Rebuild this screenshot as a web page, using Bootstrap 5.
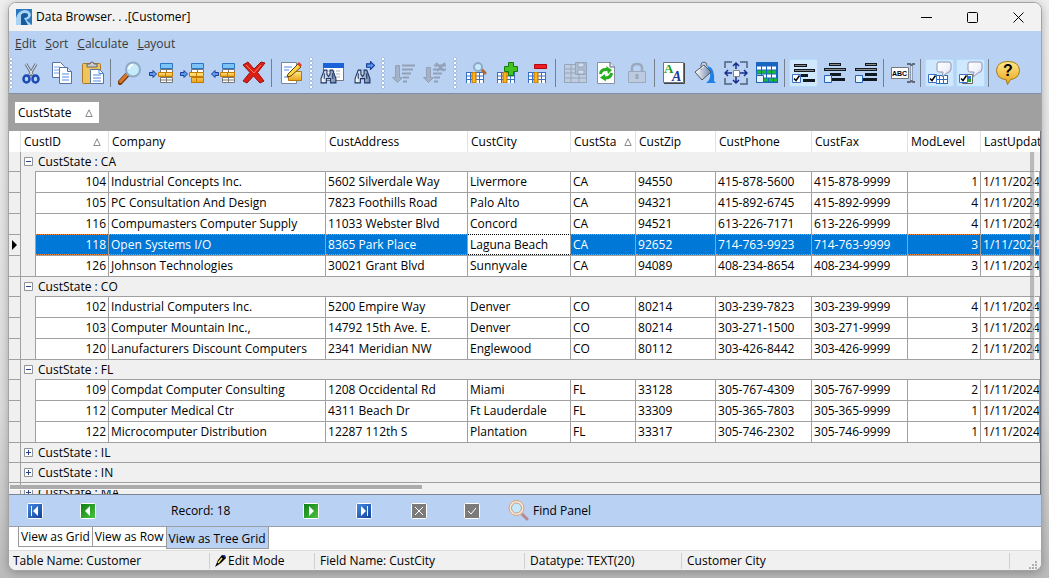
<!DOCTYPE html>
<html lang="en">
<head>
<meta charset="utf-8">
<meta name="viewport" content="width=device-width, initial-scale=1">
<title>Data Browser</title>
<link href="https://cdn.jsdelivr.net/npm/bootstrap@5.3.0/dist/css/bootstrap.min.css" rel="stylesheet">
<style>
body{font:12px/16px "Open Sans","Noto Sans",sans-serif;color:#000;background:linear-gradient(#eee,#ddd 70%,#bbb);height:100vh;padding:2px 7px 7px 8px;overflow:hidden}
button{font:inherit;color:inherit;background:none;border:0;padding:0}
svg{display:block}
.app-window{border:1px solid #a3a3a3;border-radius:8px;overflow:hidden;background:#fff;box-shadow:0 2px 10px #0004}
.title-strip{height:28px;background:#f2f2f2;padding-left:7px}
.win-btn{width:46px;height:28px}
.blue{background:#b9d1f3}
.menu-strip{height:24px;padding:1px 6px 0;gap:9px}
.menu-strip a{color:#3a3a3a;text-decoration:none}
.tool-strip{height:39px;gap:2px;border-bottom:1px solid #7d8fa9;padding-bottom:2px}
.tool{width:29px;height:28px;flex:none;display:flex;align-items:center;justify-content:center;border-radius:2px}
.tool.on{background:#cfe8fd;border:1px solid #b0dcff}
.tool:disabled{opacity:.4;filter:grayscale(1)}
.sep{width:4px;height:28px;flex:none;background:linear-gradient(#75808f,#75808f) 1px 0/1px 100% no-repeat}
.grip{width:8px;height:32px;flex:none;background:radial-gradient(circle at 2px 2px,#fff 1px,#93a7c4 1px,transparent 2px) 2px 0/4px 4px repeat-y}
.grip.lead-grip{width:5px;background-position:0 0}
.group-panel{height:37px;background:#a0a0a0;padding-left:6px}
.chip{width:84px;height:21px;background:#fff;padding:0 6px 0 3px}
.grid-pane{background:#f0f0f0;min-height:0;border-right:1px solid #70757d}
.data-grid{table-layout:fixed;border-collapse:separate;border-spacing:0;width:100%}
.data-grid th,.data-grid td{white-space:nowrap;overflow:hidden;height:21px;padding:0 2px;line-height:18px}
.data-grid th{background:#fff;font-weight:400;border-right:1px solid #e2e2e2;padding:0 3px}
.data-grid th:last-child{border-right:0;padding-right:0}
.data-grid td{border-top:1px solid #a0a0a0;border-right:1px solid #a0a0a0;background:#fff}
.data-grid td.ind{background:#f0f0f0;padding:0}
.data-grid td.pad{background:#f0f0f0;border-top:0}
.data-grid td.num{text-align:right}
.data-grid .grp td{background:#f0f0f0;height:20px}
.data-grid .grp td+td{border-right:0;padding-left:3px}
.data-grid .grp svg{margin-right:5px}
.data-grid .first td{border-top:0;height:19px}
.data-grid .sel td:nth-child(n+3){background:#0078d7;color:#fff;border-top:1px dotted #f58b3c;border-bottom:1px dotted #f58b3c}
.data-grid .sel td.focus{background:#fff;color:#000;border-top-color:#000;border-bottom-color:#000}
.vbar{position:absolute;right:5px;top:21px;width:5px;height:208px;background:#8888;border-right:1px solid #fffa}
.hbar{position:absolute;left:1px;right:0;bottom:0;height:12px;border-top:1px solid #a0a0a0}
.hbar span{display:block;width:40%;height:5px;margin-top:2px;background:#acacac;border-bottom:1px solid #fff}
.nav-strip{height:33px;border-top:1px solid #7d8794;border-bottom:1px solid #9a9ea5;display:grid;grid-template-columns:53px 91px 132px 53px 55px 53px 44px auto;align-items:center;justify-content:start;padding-left:18px}
.tab-strip{height:23px;padding-left:9px}
.view-tab{height:20px;border:1px solid #9a9a9a;border-top:0;padding:0 2px;margin-right:-1px;white-space:nowrap;line-height:18px}
.view-tab.on{height:22px;background:#b9d1f3;padding-top:2px;position:relative}
.status-strip{height:20px;background:#f0f0f0;border-top:1px solid #dcdcdc;display:grid;grid-template-columns:200px 105px 210px 157px 1fr 32px;align-items:center}
.status-strip>*+*{border-left:1px solid #d0d0d0;padding-left:5px;height:16px}
.status-strip>:first-child{padding-left:4px}
</style>
</head>
<body>
<svg width="0" height="0" class="position-absolute" aria-hidden="true">
<defs>
<linearGradient id="gold" x2="0" y2="1"><stop stop-color="#ffe88a"/><stop offset="1" stop-color="#eaa31a"/></linearGradient>
<linearGradient id="steel" x2="1"><stop stop-color="#fff"/><stop offset="1" stop-color="#6f86ad"/></linearGradient>
<linearGradient id="cloud" x2="1" y2="1"><stop stop-color="#fff"/><stop offset=".6" stop-color="#f1f2fa"/><stop offset="1" stop-color="#b4b9d2"/></linearGradient>
<linearGradient id="grn" x2="1" y2="1"><stop stop-color="#0d7d14"/><stop offset="1" stop-color="#4cc642"/></linearGradient>
<linearGradient id="blu" x2="1" y2="1"><stop stop-color="#4a8be0"/><stop offset="1" stop-color="#0b3f9c"/></linearGradient>
<symbol id="glass" viewBox="0 0 24 24"><path d="M9 14 2 21.500" stroke="#7b3f12" stroke-width="5" stroke-linecap="round"/><path d="M8.500 14 2.500 20.500" stroke="#d9782c" stroke-width="3" stroke-linecap="round"/><circle cx="15" cy="8.500" r="7" fill="#c5ebfb" stroke="#8fabc6" stroke-width="2"/><path d="M11 8a4 4 0 0 1 4-4" stroke="#fff" stroke-width="2" fill="none"/></symbol>
<symbol id="minigrid" viewBox="0 0 18 11"><path fill="#fff" d="M0 0h18v11H0z"/><path d="M0 .5h18M0 4h18M0 7.500h18M.5 0v11M4.500 0v11M13.500 0v11M17.500 0v11" stroke="#3a6fc4"/><path d="M6 0h4v11H6z" fill="#ffb31a" stroke="#b26b00"/></symbol>
<symbol id="bino" viewBox="0 0 16 14"><path d="M4 1h2.500v4L8 7l1.500-2V1H12l3 8v4h-5V9H6v4H1V9z" fill="url(#steel)" stroke="#1d3562"/><path d="M4 4v5M12 4v5" stroke="#1d3562"/></symbol>
<symbol id="arr" viewBox="0 0 8 8"><path d="M.5 2.500H4V.5L7.500 4 4 7.500v-2H.5z" fill="#5d9bf0" stroke="#1a3f98"/></symbol>
<symbol id="rows" viewBox="0 0 13 20"><path d="M.5.5h12v5H.5z" fill="#7cc4f8" stroke="#2c74c4"/><path d="M.5 6.500h12v3H.5zM.5 14.500h12v5H.5z" fill="#fff" stroke="#777"/><path d="M6.500 6v4M6.500 14v6M1 17h11" stroke="#777"/></symbol>
<symbol id="plus" viewBox="0 0 9 9"><path fill="#fff" stroke="#8e9299" d="M.5.5h8v8h-8z"/><path d="M2 4.500h5M4.500 2v5" stroke="#27408b"/></symbol>
<symbol id="minus" viewBox="0 0 9 9"><path fill="#fff" stroke="#8e9299" d="M.5.5h8v8h-8z"/><path d="M2 4.500h5" stroke="#27408b"/></symbol>
<symbol id="up" viewBox="0 0 8 8"><path d="M4 .8 7.200 7.500H.8z" fill="none" stroke="#8a8a8a"/></symbol>
<symbol id="tick" viewBox="0 0 9 9"><path fill="#fff" stroke="#3a6fc4" d="M.5.5h8v8h-8z"/><path d="M2 4.500 4 6.500 7.500 1.500" fill="none" stroke="#000" stroke-width="1.500"/></symbol>
<symbol id="bubble" viewBox="0 0 16 17"><path d="M3 1 H13 Q15 1 15 3 V8 Q15 11 11 12 L6 16 L7 11 H3 Q1 11 1 9 V3 Q1 1 3 1 Z" fill="url(#cloud)" stroke="#8e94b4"/></symbol>
</defs></svg>

<div class="app-window d-flex flex-column h-100">
<header class="title-strip d-flex align-items-center flex-shrink-0">
<svg width="16" height="16" viewBox="0 0 16 16"><path fill="#2b77bd" d="M0 0h16v16H0z"/><path d="M0 9Q2 2 8 1q6 0 7 5-1 4-5 5l6 5H9L7 9 6 16H0z" fill="#a9d4f4"/><path d="M5 16V7q0-3 4-3 3 0 3 2 0 3-4 3l4 7" fill="#185a9e"/></svg>
<span class="ms-1 me-auto">Data Browser. . .[Customer]</span>
<button class="win-btn" aria-label="Minimize"><svg class="mx-auto" width="11" height="11"><path d="M0 5.500h11" stroke="#000"/></svg></button>
<button class="win-btn" aria-label="Maximize"><svg class="mx-auto" width="11" height="11"><rect x=".5" y=".5" width="10" height="10" rx="1" fill="none" stroke="#000"/></svg></button>
<button class="win-btn" aria-label="Close"><svg class="mx-auto" width="11" height="11"><path d="m.5.5 10 10m0-10-10 10" stroke="#000"/></svg></button>
</header>
<nav class="menu-strip blue d-flex align-items-center flex-shrink-0"><a href="#"><u>E</u>dit</a><a href="#"><u>S</u>ort</a><a href="#"><u>C</u>alculate</a><a href="#"><u>L</u>ayout</a></nav>
<div class="tool-strip blue d-flex align-items-center flex-shrink-0" role="toolbar" aria-label="Tools">
<i class="grip lead-grip"></i>
<button class="tool" aria-label="Cut"><svg width="24" height="24" fill="none"><path d="M7 3l7 12M17 3l-7 12" stroke="#6d7683" stroke-width="3"/><path d="M7 3l6.500 11M17 3l-6.500 11" stroke="#e9eef4"/><ellipse cx="7.500" cy="18" rx="3" ry="3.500" stroke="#1c4bb5" stroke-width="2.500"/><ellipse cx="16.500" cy="18" rx="3" ry="3.500" stroke="#1c4bb5" stroke-width="2.500"/></svg></button>
<button class="tool" aria-label="Copy"><svg width="24" height="24" fill="#fff" stroke="#5573a5"><path d="M2.500 1.500h8l4 4v11h-12z"/><path d="M4 6h6M4 9h6M4 12h6" stroke="#6fa2ec"/><path d="M9.500 6.500h8l4 4v12h-12z"/><path d="M17.500 6.500v4h4" fill="#cfe0f8"/><path d="M12 13h7M12 16h7M12 19h7" stroke="#4f8ae6"/></svg></button>
<button class="tool" aria-label="Paste"><svg width="24" height="24" stroke="#a8792a"><rect x="1.500" y="2.500" width="18" height="20" rx="1" fill="#efc45b"/><path d="M6 6V3h3q0-2 2-2t2 2h3v3z" fill="#c9cdd2" stroke="#666"/><path d="M9.500 8.500h9l4 4v10h-13z" fill="#fff" stroke="#5573a5"/><path d="M18 8.500v4h4M12 14h8M12 17h8M12 20h8" fill="none" stroke="#4f8ae6"/></svg></button>
<i class="sep"></i>
<button class="tool" aria-label="Find"><svg width="24" height="24"><use href="#glass"/></svg></button>
<button class="tool" aria-label="Insert row"><svg width="24" height="24"><use href="#rows" x="11" y="2" width="13" height="20"/><path d="M9.500 11.500h14v4h-14z" fill="url(#gold)" stroke="#c47b00"/><path d="M16.500 12v4" stroke="#c47b00"/><use href="#arr" x="0" y="9" width="8" height="8"/></svg></button>
<button class="tool" aria-label="Append row"><svg width="24" height="24"><use href="#rows" x="11" y="2" width="13" height="20"/><path d="M9.500 11.500h14v4h-14zM11.500 16.500h12v5h-12z" fill="url(#gold)" stroke="#c47b00"/><path d="M16.500 11v11" stroke="#c47b00"/><use href="#arr" x="0" y="9" width="8" height="8"/></svg></button>
<button class="tool" aria-label="Move row"><svg width="24" height="24"><use href="#rows" x="11" y="2" width="13" height="20"/><path d="M9.500 11.500h14v4h-14z" fill="url(#gold)" stroke="#c47b00"/><path d="M16.500 12v4" stroke="#c47b00"/><g transform="rotate(180 4 13)"><use href="#arr" x="0" y="9" width="8" height="8"/></g></svg></button>
<button class="tool" aria-label="Delete"><svg width="24" height="24"><path d="M1 4l5-3 6 7 7-7 4 1-7.500 9.500L22 20l-4 2-6.500-7L5 22l-4-2 7-8.500z" fill="#dc2016" stroke="#981109"/><path d="m4 4 8 8 7-8" stroke="#ff7b66" fill="none"/></svg></button>
<i class="sep"></i>
<button class="tool" aria-label="Edit record"><svg width="24" height="24"><path d="M2.500 1.500h15v21h-15z" fill="#fff" stroke="#7a8798"/><path d="M5 6h8M5 9h5M5 16h4" stroke="#4f8ae6"/><path d="M9.500 12.500h4l1-2h8v9h-13z" fill="url(#gold)" stroke="#b3780c"/><path d="m9 13 10-10 3 3-10 9-4 1z" fill="#ffd23e" stroke="#5b4715"/><path d="m18 3 2-2 3 3-2 2z" fill="#e53a25"/></svg></button>
<i class="grip"></i>
<button class="tool" aria-label="Search table"><svg width="24" height="24"><path d="M3.500 2.500h20v17h-20z" fill="#fff" stroke="#777"/><path d="M3 2h21v5H3z" fill="#1b62d8"/><path d="M6 10h15M6 13h15M6 16h15" stroke="#a2adbd" stroke-dasharray="4 1"/><use href="#bino" x="0" y="8" width="17" height="15"/></svg></button>
<button class="tool" aria-label="Search next"><svg width="24" height="24"><use href="#bino" x="3" y="8" width="17" height="15"/><use href="#arr" x="15" y="0" width="9" height="9"/></svg></button>
<i class="grip"></i>
<button class="tool" aria-label="Sort" disabled><svg width="24" height="24" fill="#7f8792" stroke="#535b66"><path d="M3.500 4.500h4v12h3l-5 5-5-5h3z"/><path d="M10 4.500h13M10 8.500h11M10 12.500h9M11 16.500h6M11 20.500h4" stroke-width="2"/></svg></button>
<button class="tool" aria-label="Clear sort" disabled><svg width="24" height="24" fill="#7f8792" stroke="#535b66"><path d="M3.500 6.500h4v10h3l-5 5-5-5h3z"/><path d="M11 4.500h12M10 8.500h13M10 12.500h9M11 16.500h6M11 20.500h4M13 2l8 8m1-8-8 8" stroke-width="2"/></svg></button>
<i class="grip"></i>
<button class="tool" aria-label="Find column"><svg width="24" height="24"><use href="#minigrid" x="2" y="11" width="18" height="11"/><path d="m17 8 4 4" stroke="#b5652c" stroke-width="3" stroke-linecap="round"/><circle cx="14" cy="6" r="4" fill="#c5ebfb" stroke="#8fabc6" stroke-width="2"/></svg></button>
<button class="tool" aria-label="Add column"><svg width="24" height="24"><use href="#minigrid" x="2" y="11" width="18" height="11"/><path d="M13.500 1.500h5v4h4v5h-4v4h-5v-4h-4v-5h4z" fill="#43c322" stroke="#137b0c"/></svg></button>
<button class="tool" aria-label="Remove column"><svg width="24" height="24"><use href="#minigrid" x="2" y="11" width="18" height="11"/><path d="M8.500 3.500h12v4h-12z" fill="#f11d24" stroke="#b00912"/></svg></button>
<i class="sep"></i>
<button class="tool" aria-label="Save layout" disabled><svg width="24" height="24" fill="#c5c8cc" stroke="#5f6773"><path d="M1.500 3.500h22v18h-22zM1 8h22M1 12h22M1 17h22M8 4v18M16 12v10"/><path d="M12.500 1.500h11v12h-11z" fill="#9ba1aa"/><path d="M15 2h6v4h-6zM15 9h6v4h-6z" fill="#eee"/></svg></button>
<button class="tool" aria-label="Refresh"><svg width="24" height="24"><path d="M3.500 1.500h13l4 4v17h-17z" fill="#fff" stroke="#8792a3"/><path d="M16 1v5h5" fill="#dde5ef" stroke="#5c6878"/><path d="M6.500 13Q7 8 13 8.500M17.500 12q-.5 5-6.500 5" fill="none" stroke="#28ad21" stroke-width="3"/><path d="M12 5l6 4-4 4zM12 20.500l-6-4 5-3.500z" fill="#28ad21"/></svg></button>
<button class="tool" aria-label="Lock" disabled><svg width="24" height="24" fill="none" stroke="#69717d"><path d="M7 11V7q0-4 5-4t5 4v4" stroke-width="2.500"/><path d="M3.500 10.500h17v11h-17z" fill="#c0c5cc"/><path d="M12 13v5" stroke-width="3"/></svg></button>
<i class="sep"></i>
<button class="tool" aria-label="Font"><svg width="24" height="24"><path d="M1.500 1.500h20v20h-20z" fill="#fff" stroke="#6b7480"/><path d="M2 22.500h20.500V2" fill="none" stroke="#444"/><text x="2" y="12" font-family="Liberation Serif,serif" font-size="13" font-weight="700" fill="#149b1b">A</text><text x="10" y="20" font-family="Liberation Serif,serif" font-size="14" font-weight="700" font-style="italic" fill="#173c9b">A</text></svg></button>
<button class="tool" aria-label="Fill colour"><svg width="24" height="24"><path d="M14 5q8 1 7 15l2 2H13q5-3 4-11z" fill="#1d80eb"/><path d="m11 4 7 7-9 8-7-8z" fill="url(#steel)" stroke="#555"/><path d="M8 9V4q0-3 3-3t3 4" fill="none" stroke="#666"/><path d="m4 11 7-6" stroke="#fff"/></svg></button>
<button class="tool" aria-label="Best fit"><svg width="24" height="24" fill="none" stroke="#172c8d"><path d="M1 7V1h7M16 1h7v6M23 17v6h-7M8 23H1v-6" stroke="#506181" stroke-width="1.500"/><path d="M12 8V2m-3 3 3-3 3 3M12 16v6m-3-3 3 3 3-3M8 12H1m3-3-3 3 3 3M16 12h7m-3-3 3 3-3 3" stroke-width="1.500"/><path d="M9.500 9.500h6v6h-6z" fill="#fff" stroke="#888"/></svg></button>
<button class="tool" aria-label="Row colours"><svg width="24" height="24"><path d="M1 1h22v21H1z" fill="#1665c1"/><path d="M2 7h20M2 15h20" stroke="#fff" stroke-width="3" stroke-dasharray="4 1"/><path d="M2 11h20M9 19h13" stroke="#18b935" stroke-width="3" stroke-dasharray="4 1"/><path d="M1.500 14.500h7v7h-7z" fill="#e8f3ff" stroke="#2360a5"/></svg></button>
<i class="sep"></i>
<button class="tool on" aria-label="Align left"><svg width="24" height="24"><path d="M2 4.500h13M2 9.500h21M9 14.500h7M11 19.500h12" stroke="#101820" stroke-width="3"/><path d="M3 4.500h11M3 9.500h19" stroke="#888"/><use href="#tick" x="0" y="13" width="9" height="9"/></svg></button>
<button class="tool" aria-label="Align centre"><svg width="24" height="24"><path d="M6 3.500h12M1 8.500h22M7 13.500h11M8 18.500h14" stroke="#101820" stroke-width="3"/><path d="M7 3.500h10M2 8.500h20" stroke="#888"/><path d="M1.500 14.500h7v7h-7z" fill="#e2f2ff" stroke="#2762ba"/></svg></button>
<button class="tool" aria-label="Align right"><svg width="24" height="24"><path d="M11 3.500h12M1 8.500h22M11 13.500h12M8 18.500h15" stroke="#101820" stroke-width="3"/><path d="M12 3.500h10M2 8.500h20" stroke="#888"/><path d="M1.500 14.500h7v7h-7z" fill="#e2f2ff" stroke="#2762ba"/></svg></button>
<i class="sep"></i>
<button class="tool" aria-label="Rename"><svg width="24" height="24"><path d="M.5 6.500h17v11H.5z" fill="#fff" stroke="#777"/><text x="1" y="15" font-family="Liberation Sans,sans-serif" font-size="7" font-weight="700">ABC</text><path d="M16 3h3l1.500 1.500L22 3h2M20.500 4v16M16 21h3l1.500-1.500L22 21h2" fill="none" stroke="#626a78" stroke-width="2"/><path d="M20.500 5v14" stroke="#dfe3ea"/></svg></button>
<i class="sep"></i>
<button class="tool on" aria-label="Cell hints" aria-pressed="true"><svg width="24" height="24"><path d="M8 14h12v9H8z" fill="#fff"/><path d="M8 14.500h12M8 18.500h12M8 22.500h12M11.500 14v9M15.500 14v9M19.500 14v9" stroke="#2869c3"/><use href="#bubble" x="8" y="0" width="16" height="17"/><use href="#tick" x="0" y="13" width="9" height="9"/></svg></button>
<button class="tool on" aria-label="Image hints" aria-pressed="true"><svg width="24" height="24"><path d="M3.500 13.500h10v9h-10z" fill="#fff" stroke="#666"/><path d="M9 15h3v3H9z" fill="#2773d8"/><path d="M9 18h3v3H9z" fill="#2fa22a"/><use href="#bubble" x="8" y="0" width="16" height="17"/><use href="#tick" x="0" y="13" width="9" height="9"/></svg></button>
<i class="sep"></i>
<button class="tool" aria-label="Help"><svg width="24" height="24"><path d="M12 .5q11 0 11.500 9-.5 8-9 9l-3 5-1.500-5Q1 18 .5 9.500 1 .5 12 .5z" fill="url(#gold)" stroke="#a77a12"/><text x="7" y="15" font-family="Liberation Sans,sans-serif" font-size="16" font-weight="700">?</text></svg></button>
</div>
<div class="group-panel d-flex align-items-center flex-shrink-0"><button class="chip d-flex align-items-center justify-content-between">CustState<svg width="8" height="8"><use href="#up"/></svg></button></div>

<main class="grid-pane flex-grow-1 position-relative overflow-hidden">
<table class="data-grid">
<colgroup><col style="width:12px"><col style="width:15px"><col style="width:73px"><col style="width:217px"><col style="width:142px"><col style="width:103px"><col style="width:65px"><col style="width:80px"><col style="width:96px"><col style="width:96px"><col style="width:73px"><col></colgroup>
<thead><tr><th></th><th colspan="2"><div class="d-flex align-items-center justify-content-between pe-1">CustID<svg width="8" height="8"><use href="#up"/></svg></div></th><th>Company</th><th>CustAddress</th><th>CustCity</th><th><div class="d-flex align-items-center"><span class="overflow-hidden flex-grow-1">CustState</span><svg class="ms-2 flex-shrink-0" width="8" height="8"><use href="#up"/></svg></div></th><th>CustZip</th><th>CustPhone</th><th>CustFax</th><th>ModLevel</th><th>LastUpdate</th></tr></thead>
<tbody>
<tr class="grp first"><td class="ind"></td><td colspan="11"><div class="d-flex align-items-center"><svg width="9" height="9"><use href="#minus"/></svg>CustState : CA</div></td></tr>
<tr><td class="ind"></td><td class="pad"></td><td class="num">104</td><td>Industrial Concepts Inc.</td><td>5602 Silverdale Way</td><td>Livermore</td><td>CA</td><td>94550</td><td>415-878-5600</td><td>415-878-9999</td><td class="num">1</td><td>1/11/2024</td></tr>
<tr><td class="ind"></td><td class="pad"></td><td class="num">105</td><td>PC Consultation And Design</td><td>7823 Foothills Road</td><td>Palo Alto</td><td>CA</td><td>94321</td><td>415-892-6745</td><td>415-892-9999</td><td class="num">4</td><td>1/11/2024</td></tr>
<tr><td class="ind"></td><td class="pad"></td><td class="num">116</td><td>Compumasters Computer Supply</td><td>11033 Webster Blvd</td><td>Concord</td><td>CA</td><td>94521</td><td>613-226-7171</td><td>613-226-9999</td><td class="num">4</td><td>1/11/2024</td></tr>
<tr class="sel"><td class="ind"><svg class="mx-auto" width="5" height="10"><path d="M0 0l5 5-5 5z"/></svg></td><td class="pad"></td><td class="num">118</td><td>Open Systems I/O</td><td>8365 Park Place</td><td class="focus">Laguna Beach</td><td>CA</td><td>92652</td><td>714-763-9923</td><td>714-763-9999</td><td class="num">3</td><td>1/11/2024</td></tr>
<tr><td class="ind"></td><td class="pad"></td><td class="num">126</td><td>Johnson Technologies</td><td>30021 Grant Blvd</td><td>Sunnyvale</td><td>CA</td><td>94089</td><td>408-234-8654</td><td>408-234-9999</td><td class="num">3</td><td>1/11/2024</td></tr>
<tr class="grp"><td class="ind"></td><td colspan="11"><div class="d-flex align-items-center"><svg width="9" height="9"><use href="#minus"/></svg>CustState : CO</div></td></tr>
<tr><td class="ind"></td><td class="pad"></td><td class="num">102</td><td>Industrial Computers Inc.</td><td>5200 Empire Way</td><td>Denver</td><td>CO</td><td>80214</td><td>303-239-7823</td><td>303-239-9999</td><td class="num">4</td><td>1/11/2024</td></tr>
<tr><td class="ind"></td><td class="pad"></td><td class="num">103</td><td>Computer Mountain Inc.,</td><td>14792 15th Ave. E.</td><td>Denver</td><td>CO</td><td>80214</td><td>303-271-1500</td><td>303-271-9999</td><td class="num">3</td><td>1/11/2024</td></tr>
<tr><td class="ind"></td><td class="pad"></td><td class="num">120</td><td>Lanufacturers Discount Computers</td><td>2341 Meridian NW</td><td>Englewood</td><td>CO</td><td>80112</td><td>303-426-8442</td><td>303-426-9999</td><td class="num">2</td><td>1/11/2024</td></tr>
<tr class="grp"><td class="ind"></td><td colspan="11"><div class="d-flex align-items-center"><svg width="9" height="9"><use href="#minus"/></svg>CustState : FL</div></td></tr>
<tr><td class="ind"></td><td class="pad"></td><td class="num">109</td><td>Compdat Computer Consulting</td><td>1208 Occidental Rd</td><td>Miami</td><td>FL</td><td>33128</td><td>305-767-4309</td><td>305-767-9999</td><td class="num">2</td><td>1/11/2024</td></tr>
<tr><td class="ind"></td><td class="pad"></td><td class="num">112</td><td>Computer Medical Ctr</td><td>4311 Beach Dr</td><td>Ft Lauderdale</td><td>FL</td><td>33309</td><td>305-365-7803</td><td>305-365-9999</td><td class="num">1</td><td>1/11/2024</td></tr>
<tr><td class="ind"></td><td class="pad"></td><td class="num">122</td><td>Microcomputer Distribution</td><td>12287 112th S</td><td>Plantation</td><td>FL</td><td>33317</td><td>305-746-2302</td><td>305-746-9999</td><td class="num">1</td><td>1/11/2024</td></tr>
<tr class="grp"><td class="ind"></td><td colspan="11"><div class="d-flex align-items-center"><svg width="9" height="9"><use href="#plus"/></svg>CustState : IL</div></td></tr>
<tr class="grp"><td class="ind"></td><td colspan="11"><div class="d-flex align-items-center"><svg width="9" height="9"><use href="#plus"/></svg>CustState : IN</div></td></tr>
<tr class="grp"><td class="ind"></td><td colspan="11"><div class="d-flex align-items-center"><svg width="9" height="9"><use href="#plus"/></svg>CustState : MA</div></td></tr>
</tbody></table>
<div class="vbar"></div><div class="hbar"><span></span></div>
</main>

<div class="nav-strip blue flex-shrink-0">
<button class="d-flex" aria-label="First record"><svg width="16" height="16"><rect x=".5" y=".5" width="15" height="15" rx="1" fill="url(#blu)" stroke="#fff"/><path d="M11 3v10L6 8z" fill="#fff"/><path d="M4.500 3v10" stroke="#fff"/></svg></button>
<button class="d-flex" aria-label="Previous record"><svg width="16" height="16"><rect x=".5" y=".5" width="15" height="15" rx="1" fill="url(#grn)" stroke="#fff"/><path d="M10 3v10L5 8z" fill="#fff"/></svg></button>
<span>Record: 18</span>
<button class="d-flex" aria-label="Next record"><svg width="16" height="16"><rect x=".5" y=".5" width="15" height="15" rx="1" fill="url(#grn)" stroke="#fff"/><path d="M6 3v10l5-5z" fill="#fff"/></svg></button>
<button class="d-flex" aria-label="Last record"><svg width="16" height="16"><rect x=".5" y=".5" width="15" height="15" rx="1" fill="url(#blu)" stroke="#fff"/><path d="M5 3v10l5-5z" fill="#fff"/><path d="M11.500 3v10" stroke="#fff"/></svg></button>
<button class="d-flex" aria-label="Cancel"><svg width="16" height="16"><rect x=".5" y=".5" width="15" height="15" rx="1" fill="#7b7b7b" stroke="#fff"/><path d="m4 4 8 8m0-8-8 8" stroke="#fff"/></svg></button>
<button class="d-flex" aria-label="Post"><svg width="16" height="16"><rect x=".5" y=".5" width="15" height="15" rx="1" fill="#7b7b7b" stroke="#fff"/><path d="m4 8 3 3 5-6" fill="none" stroke="#fff"/></svg></button>
<button class="d-flex align-items-center gap-1"><svg width="21" height="21" viewBox="0 0 21 21"><path d="m13 13 6 6" stroke="#b98791" stroke-width="3" stroke-linecap="round"/><circle cx="8.500" cy="8" r="6.500" fill="#c5e8fa" stroke="#f8ead6" stroke-width="3"/><circle cx="8.500" cy="8" r="7.500" fill="none" stroke="#c49b83"/><circle cx="8.500" cy="8" r="5" fill="none" stroke="#c49b83"/></svg>Find Panel</button>
</div>
<div class="tab-strip d-flex align-items-start flex-shrink-0"><button class="view-tab">View as Grid</button><button class="view-tab">View as Row</button><button class="view-tab on">View as Tree Grid</button></div>
<footer class="status-strip flex-shrink-0">
<span>Table Name: Customer</span>
<span class="d-flex align-items-center"><svg width="13" height="12"><path d="M0 12l3-7 4-5h3l1 3-5 5z" fill="#000"/><path d="m3 8 4-5" stroke="#ffe65b" stroke-width="1.500"/><path d="m7 0h3v3z" fill="#2936b5"/></svg>Edit Mode</span>
<span>Field Name: CustCity</span><span>Datatype: TEXT(20)</span><span>Customer City</span>
<span class="d-flex align-items-end justify-content-end pe-1"><svg width="8" height="8" fill="#b0b0b0"><path d="M6 0h2v2H6zM3 3h2v2H3zM6 3h2v2H6zM0 6h2v2H0zM3 6h2v2H3zM6 6h2v2H6z"/></svg></span>
</footer>
</div>
<script src="https://cdn.jsdelivr.net/npm/bootstrap@5.3.0/dist/js/bootstrap.bundle.min.js"></script>
</body>
</html>
